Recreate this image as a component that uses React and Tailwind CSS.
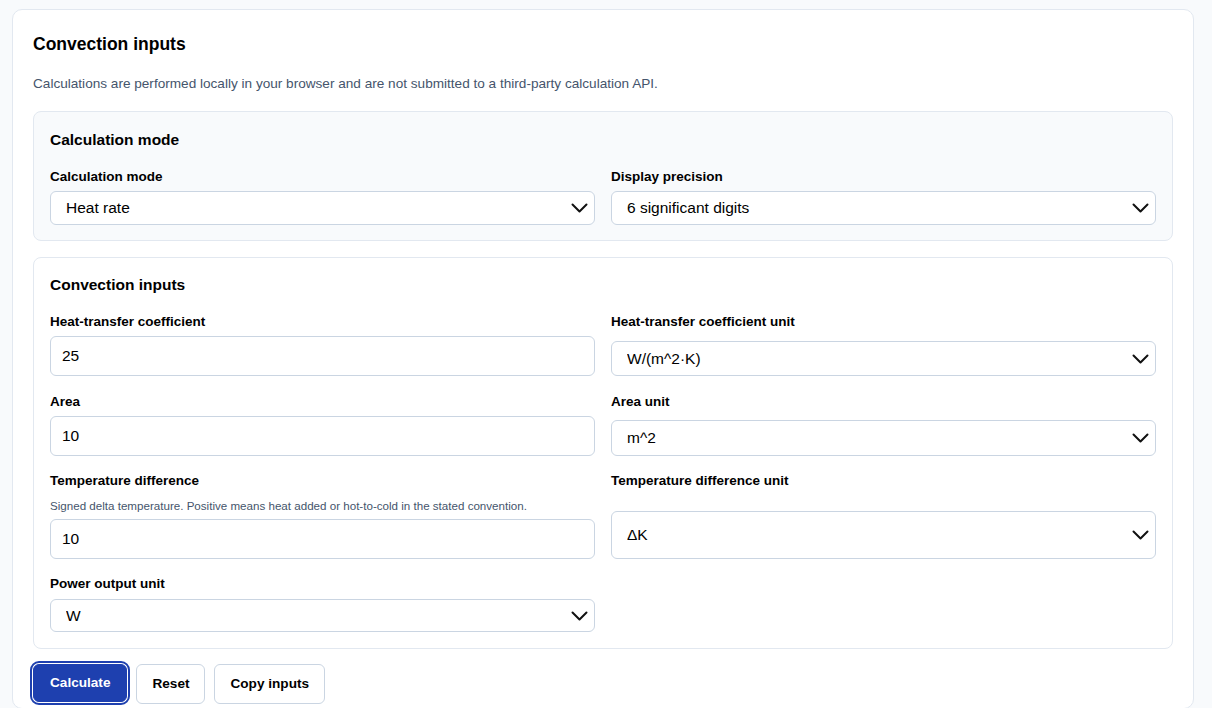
function Chevron() {
    return (
        <svg
            className="pointer-events-none absolute right-[7px] top-1/2 -translate-y-1/2"
            width="17"
            height="10"
            viewBox="0 0 17 10"
            fill="none"
        >
            <path d="M1.5 1.5 L8.5 8.5 L15.5 1.5" stroke="#111" strokeWidth="2" strokeLinecap="round" strokeLinejoin="round" />
        </svg>
    );
}

function Select({ value, className = '' }) {
    return (
        <div className={`relative ${className}`}>
            <select
                defaultValue={value}
                className="h-full w-full appearance-none rounded-md border border-slate-300 bg-white pl-[15px] pr-10 text-[15.5px] text-black outline-none"
            >
                <option>{value}</option>
            </select>
            <Chevron />
        </div>
    );
}

function Input({ value }) {
    return (
        <input
            defaultValue={value}
            className="block h-[40px] w-full rounded-md border border-slate-300 bg-white px-[11px] text-[15.5px] text-black outline-none"
        />
    );
}

function Label({ children }) {
    return <div className="text-[13.5px] font-bold leading-5 text-black">{children}</div>;
}

export default function App() {
    return (
        <div
            className="min-h-screen bg-[#f8fafc] px-3 pt-[9px]"
            style={{ fontFamily: '"Liberation Sans", Arial, sans-serif' }}
        >
            <div className="w-[1182px] rounded-[10px] border border-slate-200 bg-white px-[20px] pt-[22px] pb-1">
                <h2 className="text-[17.5px] font-bold leading-6 text-black">Convection inputs</h2>
                <p className="mt-[18px] text-[13.6px] leading-5 text-slate-600">
                    Calculations are performed locally in your browser and are not submitted to a third-party calculation API.
                </p>

                <section className="mt-[17px] rounded-lg border border-slate-200 bg-[#f8fafc] px-4 pt-[16px] pb-[15px]">
                    <h3 className="text-[15.5px] font-bold leading-6 text-black">Calculation mode</h3>
                    <div className="mt-[15px] grid grid-cols-2 gap-x-4">
                        <div>
                            <Label>Calculation mode</Label>
                            <Select value="Heat rate" className="mt-[4px] h-[34px]" />
                        </div>
                        <div>
                            <Label>Display precision</Label>
                            <Select value="6 significant digits" className="mt-[4px] h-[34px]" />
                        </div>
                    </div>
                </section>

                <section className="mt-4 rounded-lg border border-slate-200 bg-white px-4 pt-[15px] pb-4">
                    <h3 className="text-[15.5px] font-bold leading-6 text-black">Convection inputs</h3>
                    <div className="mt-[15px] grid grid-cols-2 gap-x-4">
                        <div>
                            <Label>Heat-transfer coefficient</Label>
                            <div className="mt-[4px]">
                                <Input value="25" />
                            </div>
                        </div>
                        <div>
                            <Label>Heat-transfer coefficient unit</Label>
                            <Select value="W/(m^2·K)" className="mt-[9px] h-[35px]" />
                        </div>

                        <div className="mt-4">
                            <Label>Area</Label>
                            <div className="mt-[4px]">
                                <Input value="10" />
                            </div>
                        </div>
                        <div className="mt-4">
                            <Label>Area unit</Label>
                            <Select value="m^2" className="mt-[8px] h-[36px]" />
                        </div>

                        <div className="mt-[15px]">
                            <Label>Temperature difference</Label>
                            <p className="mt-[7px] text-[11.6px] leading-4 text-slate-600">
                                Signed delta temperature. Positive means heat added or hot-to-cold in the stated convention.
                            </p>
                            <div className="mt-[5px]">
                                <Input value="10" />
                            </div>
                        </div>
                        <div className="mt-[15px]">
                            <Label>Temperature difference unit</Label>
                            <Select value="ΔK" className="mt-[20px] h-[48px]" />
                        </div>

                        <div className="mt-[15px]">
                            <Label>Power output unit</Label>
                            <Select value="W" className="mt-[5px] h-[33px]" />
                        </div>
                    </div>
                </section>

                <div className="mt-[15px] flex gap-[9px]">
                    <button className="h-[38px] rounded-md border border-[#1e40af] bg-[#1e40af] px-4 text-[13.6px] font-bold text-white outline outline-2 outline-offset-1 outline-[#1e40af]">
                        Calculate
                    </button>
                    <button className="h-[40px] rounded-md border border-slate-300 bg-white px-[15px] text-[13.6px] font-bold text-black">
                        Reset
                    </button>
                    <button className="h-[40px] rounded-md border border-slate-300 bg-white px-[15px] text-[13.6px] font-bold text-black">
                        Copy inputs
                    </button>
                </div>
            </div>
        </div>
    );
}
